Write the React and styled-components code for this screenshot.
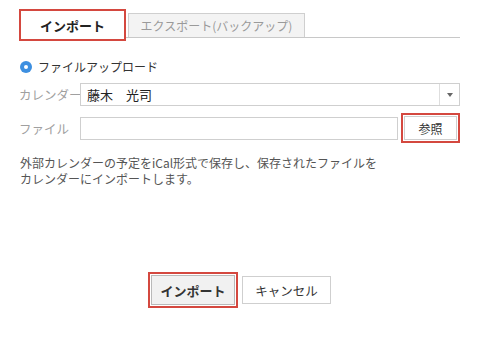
import React from 'react';
import styled, { createGlobalStyle } from 'styled-components';

const GlobalStyle = createGlobalStyle`
  body {
    margin: 0;
    background: #fff;
    font-family: 'Noto Sans CJK JP', 'Liberation Sans', sans-serif;
    color: #333;
  }
`;

const Page = styled.div`
  width: 441px;
  padding: 9px 0 0 19px;
`;

const TabBar = styled.div`
  display: flex;
  align-items: flex-end;
  gap: 2px;
  height: 28px;
  border-bottom: 1px solid #c8c8c8;
`;

const Tab = styled.div`
  display: flex;
  align-items: center;
  justify-content: center;
  box-sizing: border-box;
  ${({ $active }) =>
    $active
      ? `
    width: 107px;
    height: 32px;
    margin-bottom: -4px;
    border: 2px solid #d4483f;
    background: #fff;
    font-size: 13px;
    font-weight: bold;
    color: #222;
  `
      : `
    width: 177px;
    height: 24px;
    border: 1px solid #cfcfcf;
    border-bottom: none;
    background: #f3f3f3;
    font-size: 12px;
    color: #9a9a9a;
  `}
`;

const RadioRow = styled.label`
  display: flex;
  align-items: center;
  gap: 6px;
  margin-top: 20px;
  padding-left: 1px;
  font-size: 12px;
  color: #333;
`;

const RadioDot = styled.span`
  width: 12px;
  height: 12px;
  border-radius: 50%;
  background: #3d8fe0;
  display: flex;
  align-items: center;
  justify-content: center;
  &::after {
    content: '';
    width: 4px;
    height: 4px;
    border-radius: 50%;
    background: #fff;
  }
`;

const FieldRow = styled.div`
  display: flex;
  align-items: center;
  margin-top: ${({ $mt }) => $mt}px;
`;

const Label = styled.span`
  width: 61px;
  font-size: 12.5px;
  color: #a0a0a0;
  white-space: nowrap;
`;

const Select = styled.div`
  flex: 1;
  height: 23px;
  box-sizing: border-box;
  border: 1px solid #cfcfcf;
  display: flex;
  align-items: center;
  font-size: 13px;
  color: #222;
`;

const SelectText = styled.span`
  flex: 1;
  padding-left: 6px;
`;

const Arrow = styled.span`
  width: 19px;
  height: 100%;
  border-left: 1px solid #dedede;
  display: flex;
  align-items: center;
  justify-content: center;
  &::after {
    content: '';
    border-left: 3.5px solid transparent;
    border-right: 3.5px solid transparent;
    border-top: 4px solid #666;
  }
`;

const FileInput = styled.div`
  width: 320px;
  height: 23px;
  box-sizing: border-box;
  border: 1px solid #cfcfcf;
`;

const Highlight = styled.div`
  border: 2px solid #d4483f;
  padding: 1px;
  margin-left: ${({ $ml }) => $ml || 0}px;
  display: flex;
`;

const Button = styled.button`
  box-sizing: border-box;
  width: ${({ $w }) => $w}px;
  height: ${({ $h }) => $h}px;
  border: 1px solid ${({ $primary }) => ($primary ? '#b9b9b9' : '#cfcfcf')};
  background: ${({ $primary }) => ($primary ? '#f1f1f1' : '#fff')};
  font-family: inherit;
  font-size: ${({ $fs }) => $fs || 13}px;
  font-weight: ${({ $primary }) => ($primary ? 'bold' : 'normal')};
  color: #333;
  padding: 0;
`;

const Description = styled.p`
  margin: 12px 0 0 1px;
  font-size: 12px;
  line-height: 16px;
  color: #555;
`;

const Footer = styled.div`
  display: flex;
  justify-content: center;
  align-items: center;
  gap: 4px;
  margin-top: 85px;
`;

export default function App() {
  return (
    <>
      <GlobalStyle />
      <Page>
        <TabBar>
          <Tab $active>インポート</Tab>
          <Tab>エクスポート(バックアップ)</Tab>
        </TabBar>

        <RadioRow>
          <RadioDot />
          ファイルアップロード
        </RadioRow>

        <FieldRow $mt={8}>
          <Label>カレンダー</Label>
          <Select>
            <SelectText>藤木　光司</SelectText>
            <Arrow />
          </Select>
        </FieldRow>

        <FieldRow $mt={7}>
          <Label>ファイル</Label>
          <FileInput />
          <Highlight $ml={3}>
            <Button $w={53} $h={24} $fs={12}>参照</Button>
          </Highlight>
        </FieldRow>

        <Description>
          外部カレンダーの予定をiCal形式で保存し、保存されたファイルを
          <br />
          カレンダーにインポートします。
        </Description>

        <Footer>
          <Highlight>
            <Button $primary $w={84} $h={30}>インポート</Button>
          </Highlight>
          <Button $w={89} $h={28} $fs={12.5}>キャンセル</Button>
        </Footer>
      </Page>
    </>
  );
}
